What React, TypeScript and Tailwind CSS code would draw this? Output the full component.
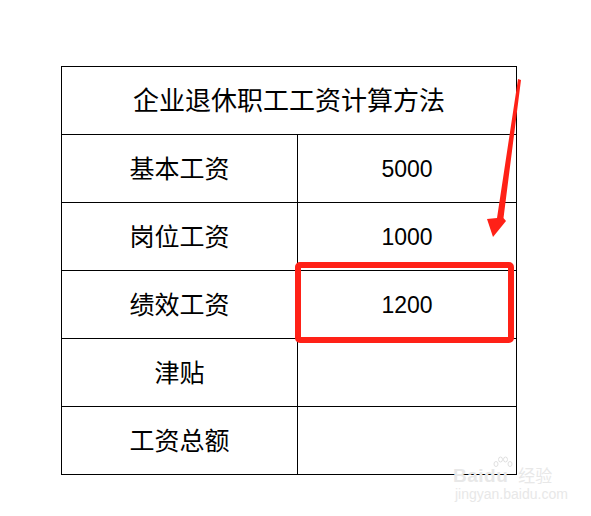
import React from 'react';

const rows: { label: string; value: string }[] = [
  { label: '基本工资', value: '5000' },
  { label: '岗位工资', value: '1000' },
  { label: '绩效工资', value: '1200' },
  { label: '津贴', value: '' },
  { label: '工资总额', value: '' },
];

const font = { fontFamily: '"Liberation Sans", "Noto Sans CJK SC", sans-serif' };

const App: React.FC = () => {
  return (
    <div className="relative w-[591px] h-[516px] bg-white overflow-hidden text-black" style={font}>
      <div className="pt-[66px] pl-[61px]">
        <div className="w-[456px] border-l border-t border-black">
          <div className="h-[68px] border-r border-b border-black flex items-center justify-center text-[26px] pt-[2px]">
            企业退休职工工资计算方法
          </div>
          {rows.map(r => (
            <div key={r.label} className="flex">
              <div className="w-[236px] h-[68px] border-r border-b border-black flex items-center justify-center text-[25px] pt-[2px]">
                {r.label}
              </div>
              <div className="w-[219px] h-[68px] border-r border-b border-black flex items-center justify-center text-[23px] pt-[2px]">
                {r.value}
              </div>
            </div>
          ))}
        </div>
      </div>

      {/* highlight box */}
      <div className="absolute left-[295px] top-[262px] w-[219px] h-[81px] border-[6px] border-[#ff2117] rounded-[5px]" />

      {/* arrow */}
      <svg className="absolute left-0 top-0" width="591" height="516" viewBox="0 0 591 516">
        <polygon
          points="518,79 521,80 503.5,218 506,221 493,237 487,219 497,218"
          fill="#ff2117"
        />
      </svg>

      {/* watermark */}
      <div className="absolute left-[453px] top-[466px] text-[#e8e8e8] select-none">
        <div className="relative flex items-end gap-[10px]">
          <span className="text-[19px] font-bold leading-none tracking-[0.5px]">Baidu</span>
          <span className="text-[17px] leading-none">经验</span>
          <svg className="absolute left-[40px] top-[-10px]" width="20" height="14" viewBox="0 0 20 14">
            <g fill="none" stroke="#e0e0e0" strokeWidth="1">
              <ellipse cx="3" cy="8" rx="2" ry="2.5" />
              <ellipse cx="7.5" cy="3.5" rx="2" ry="2.5" />
              <ellipse cx="12.5" cy="3.5" rx="2" ry="2.5" />
              <ellipse cx="17" cy="8" rx="2" ry="2.5" />
            </g>
          </svg>
        </div>
        <div className="text-[14px] leading-none mt-[2px] ml-[2px]">jingyan.baidu.com</div>
      </div>
    </div>
  );
};

export default App;
